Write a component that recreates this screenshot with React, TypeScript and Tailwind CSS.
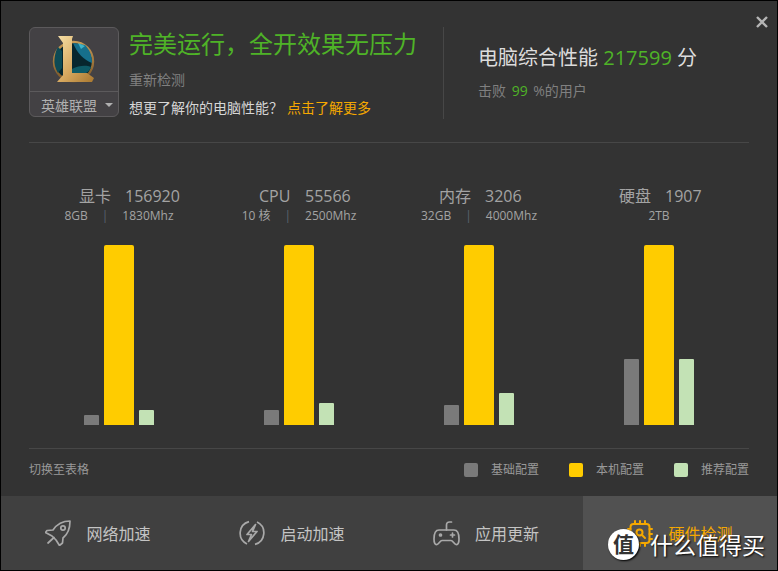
import React from 'react';

const FONT = "font-['Open_Sans','Noto_Sans_CJK_SC',sans-serif]";

const columns = [
  { name: '显卡', score: '156920', left: '8GB', right: '1830Mhz', base: 10, rec: 15 },
  { name: 'CPU', score: '55566', left: '10 核', right: '2500Mhz', base: 15, rec: 22 },
  { name: '内存', score: '3206', left: '32GB', right: '4000Mhz', base: 20, rec: 32 },
  { name: '硬盘', score: '1907', left: '', right: '2TB', base: 66, rec: 66 },
];

const LolLogo = () => (
  <svg width="44" height="47" viewBox="0 0 44 47">
    <defs>
      <linearGradient id="gold" x1="0" y1="0" x2="1" y2="1">
        <stop offset="0" stopColor="#f6dfa6" />
        <stop offset="0.55" stopColor="#d6a75e" />
        <stop offset="1" stopColor="#a8772f" />
      </linearGradient>
      <linearGradient id="ring" x1="0" y1="0" x2="0" y2="1">
        <stop offset="0" stopColor="#c69a55" />
        <stop offset="1" stopColor="#7a5526" />
      </linearGradient>
    </defs>
    <circle cx="21.5" cy="25.5" r="19.5" fill="#07262e" stroke="url(#ring)" strokeWidth="2.4" />
    <path d="M21 7 L33 9 C38 14 40 20 40 27 C32 24 25 17 21 7Z" fill="#166f8c" />
    <path d="M26 7 L33 10 L29 13Z" fill="#3cb3c9" />
    <path d="M20 33 C27 29 35 29 39 31 C38 34 36 36 34 37 L20 37Z" fill="#0e5a66" />
    <path d="M6 11 L10 15 V32 L6 37 C3 32 2 27 2.5 23 C3 18 4 14 6 11Z" fill="#0d4a55" />
    <path d="M6 0 H21 L20 3 V37 H35 L42 42 L40 46 H5 L11 39 V7Z" fill="url(#gold)" />
  </svg>
);

const RocketIcon = () => (
  <svg width="26" height="26" viewBox="0 0 26 26" fill="none" stroke="#a9a9a9" strokeWidth="1.7" strokeLinejoin="round" strokeLinecap="round">
    <path d="M25 1 C18 1 12 4 8 10 L2 10.5 L0.5 12.5 L7 16 L11 20 L14.5 25.5 L17.5 23 L18 18 C23 14 25 7 25 1Z" />
    <circle cx="18" cy="8" r="2.2" />
    <path d="M3 23 L9 17.5" />
  </svg>
);

const BoltIcon = () => (
  <svg width="26" height="26" viewBox="0 0 26 26" fill="none" stroke="#a9a9a9" strokeWidth="1.7" strokeLinejoin="round">
    <path d="M10 1.6 A12 12 0 0 0 8 24 M16 24.4 A12 12 0 0 0 18 2" />
    <path d="M16.5 4.5 L8 14.5 H12.5 L9.5 21.5 L18 11.5 H13.5Z" />
  </svg>
);

const PadIcon = () => (
  <svg width="27" height="25" viewBox="0 0 27 25" fill="none" stroke="#a9a9a9" strokeWidth="1.7" strokeLinecap="round" strokeLinejoin="round">
    <path d="M6 9 H21 C24 9 26 12 26 18 C26 22 25 24 23 23.5 C21 23 20 19.5 18 19.5 H9 C7 19.5 6 23 4 23.5 C2 24 1 22 1 18 C1 12 3 9 6 9Z" />
    <path d="M13.5 9 V4 C13.5 2 14.5 1 16.5 1 H18.5" />
    <circle cx="7.5" cy="14" r="1" />
    <path d="M17.5 14 H21.5 M19.5 12 V16" />
  </svg>
);

const ChipIcon = () => (
  <svg width="26" height="27" viewBox="0 0 26 27" fill="none" stroke="#f5a800" strokeWidth="2" strokeLinecap="round" strokeLinejoin="round">
    <rect x="3.5" y="4" width="19" height="19" rx="3" />
    <path d="M8 1 V4 M13 1 V4 M18 1 V4 M8 23 V26 M13 23 V26 M18 23 V26 M1 9 H3.5 M1 14 H3.5 M1 19 H3.5 M22.5 9 H25 M22.5 14 H25 M22.5 19 H25" />
    <circle cx="12.5" cy="12.5" r="3" />
    <path d="M15 15 L18 18" />
  </svg>
);

const Bar = ({ height, color, width, radius }: { height: number; color: string; width: string; radius: string }) => (
  <div className={`${width} ${color} ${radius}`} style={{ height }} />
);

const MetricColumn = ({ col }: { col: (typeof columns)[number] }) => (
  <div className="w-[180px] flex flex-col items-center">
    <div className="h-[24px] w-full flex items-center pl-[50px] text-[16px] leading-[24px] text-[#a3a3a3]">
      <span className="w-[46px]">{col.name}</span>
      <span>{col.score}</span>
    </div>
    <div className="h-[16px] w-full flex items-center justify-center text-[12px] leading-[16px] text-[#a3a3a3]">
      {col.left ? (
        <>
          <span>{col.left}</span>
          <span className="mx-[14px] text-[#5a6470]">|</span>
        </>
      ) : null}
      <span>{col.right}</span>
    </div>
    <div className="h-[180px] mt-[21px] flex items-end gap-[5px]">
      <Bar height={col.base} color="bg-[#7a7a7a]" width="w-[15px]" radius="rounded-t-[1px]" />
      <Bar height={180} color="bg-[#ffcc00]" width="w-[30px]" radius="rounded-t-[2px]" />
      <Bar height={col.rec} color="bg-[#c3e2b5]" width="w-[15px]" radius="rounded-t-[1px]" />
    </div>
  </div>
);

const LegendItem = ({ color, label }: { color: string; label: string }) => (
  <div className="flex items-center gap-[13px]">
    <div className={`w-[14px] h-[14px] rounded-[2px] ${color}`} />
    <span className="text-[12px] text-[#999]">{label}</span>
  </div>
);

const NavItem = ({ icon, label, active }: { icon: React.ReactNode; label: string; active?: boolean }) => (
  <div className={`flex-1 flex items-center justify-center gap-[15px] ${active ? 'bg-[#515151]' : ''}`}>
    {icon}
    <span className={`text-[16px] mt-[2px] ${active ? 'text-[#f5a800]' : 'text-[#c4c4c4]'}`}>{label}</span>
  </div>
);

export default function App() {
  return (
    <div className={`relative w-[778px] h-[571px] bg-[#333333] border border-black overflow-hidden flex flex-col ${FONT}`}>
      <button className="absolute top-[15px] right-[9px] text-[#b5b5b5]">
        <svg width="12" height="12" viewBox="0 0 12 12" stroke="currentColor" strokeWidth="2.4">
          <path d="M1 1 L11 11 M11 1 L1 11" />
        </svg>
      </button>

      {/* Header */}
      <div className="mx-[28px] mt-[26px] h-[116px] border-b border-[#474747] flex shrink-0">
        <div className="w-[90px] h-[90px] rounded-[6px] border border-[#5c5a5c] bg-[#434144] flex flex-col shrink-0">
          <div className="h-[64px] flex items-center justify-center border-b border-[#5c5a5c]">
            <LolLogo />
          </div>
          <div className="flex-1 flex items-center justify-center gap-[8px] pl-[6px] pt-[2px] text-[#b0b0b0] text-[14px]">
            <span>英雄联盟</span>
            <span className="w-0 h-0 border-x-[4px] border-x-transparent border-t-[4px] border-t-[#b0b0b0]" />
          </div>
        </div>
        <div className="ml-[10px] w-[314px] shrink-0 flex flex-col">
          <div className="text-[24px] leading-[32px] mt-[1px] text-[#4fb327] whitespace-nowrap">完美运行，全开效果无压力</div>
          <div className="text-[14px] leading-[18px] mt-[11px] text-[#808080]">重新检测</div>
          <div className="text-[14px] leading-[18px] mt-[10px] whitespace-nowrap">
            <span className="text-[#d6d6d6]">想更了解你的电脑性能？</span>
            <span className="text-[#f5a800] ml-[4px]">点击了解更多</span>
          </div>
        </div>
        <div className="h-[92px] border-l border-[#474747]" />
        <div className="ml-[34px] flex flex-col">
          <div className="text-[20px] leading-[26px] mt-[18px] text-[#dcdcdc] whitespace-nowrap">
            电脑综合性能 <span className="text-[#4fb327]">217599</span> 分
          </div>
          <div className="text-[14px] leading-[18px] mt-[11px] text-[#808080] whitespace-nowrap">
            击败 <span className="text-[#4fb327] mx-[2px]">99</span> %的用户
          </div>
        </div>
      </div>

      {/* Bars */}
      <div className="mx-[28px] mt-[41px] flex shrink-0">
        {columns.map(col => (
          <MetricColumn key={col.name} col={col} />
        ))}
      </div>

      {/* Legend */}
      <div className="mx-[28px] mt-[23px] h-[48px] pb-[6px] border-t border-[#474747] flex items-center justify-between shrink-0">
        <span className="text-[12px] text-[#999]">切换至表格</span>
        <div className="flex items-center gap-[30px]">
          <LegendItem color="bg-[#7a7a7a]" label="基础配置" />
          <LegendItem color="bg-[#ffcc00]" label="本机配置" />
          <LegendItem color="bg-[#c3e2b5]" label="推荐配置" />
        </div>
      </div>

      {/* Bottom nav */}
      <div className="flex-1 bg-[#404040] flex">
        <NavItem icon={<RocketIcon />} label="网络加速" />
        <NavItem icon={<BoltIcon />} label="启动加速" />
        <NavItem icon={<PadIcon />} label="应用更新" />
        <NavItem icon={<ChipIcon />} label="硬件检测" active />
      </div>

      {/* Watermark */}
      <div className="absolute left-[607px] top-[527px] flex items-center gap-[11px]">
        <div className="w-[31px] h-[31px] rounded-full bg-white text-[#333] text-[21px] leading-[31px] text-center font-bold shadow-[1px_1px_2px_#000]">值</div>
        <span className="text-[23px] leading-[30px] mt-[2px] text-white [text-shadow:1px_1px_2px_#000] whitespace-nowrap">什么值得买</span>
      </div>
    </div>
  );
}
